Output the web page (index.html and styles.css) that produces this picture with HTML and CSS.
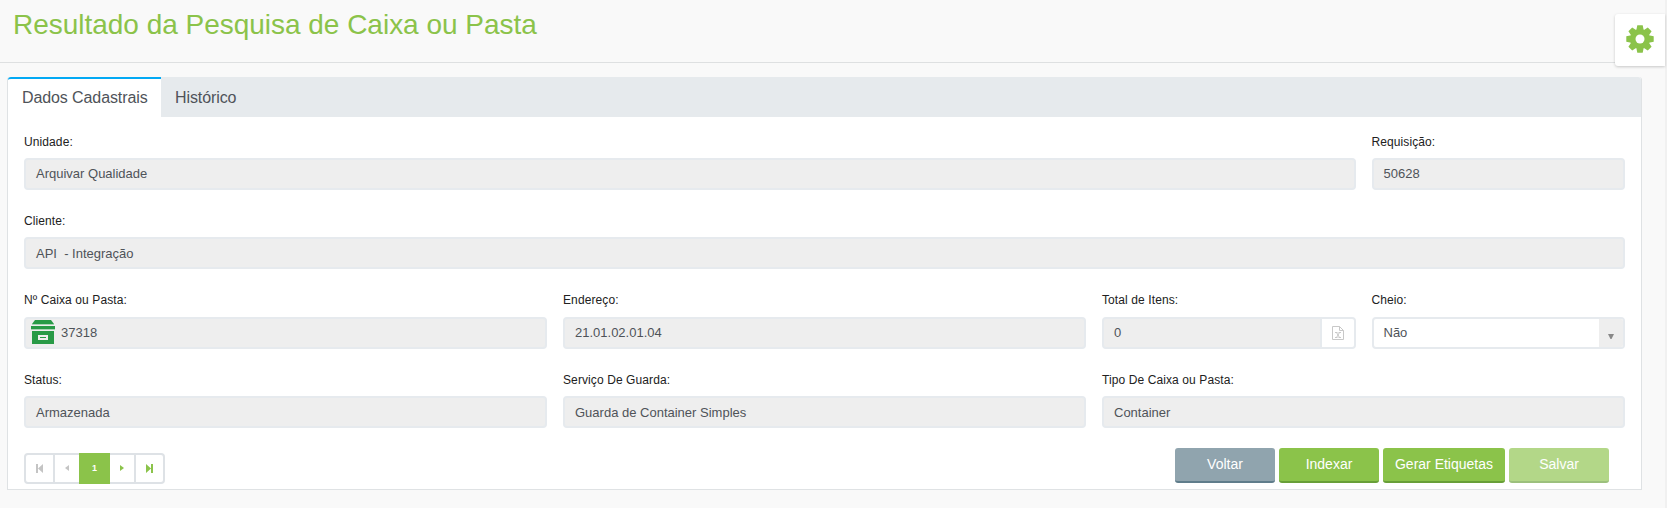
FILE: index.html
```
<!DOCTYPE html>
<html lang="pt-BR">
<head>
<meta charset="utf-8">
<title>Resultado da Pesquisa de Caixa ou Pasta</title>
<link rel="stylesheet" href="styles.css">
</head>
<body>
<header class="header"><h1 class="title">Resultado da Pesquisa de Caixa ou Pasta</h1></header>
<main class="panel">
  <nav class="tabs">
    <a class="tab tab-active"><span>Dados Cadastrais</span></a>
    <a class="tab"><span>Histórico</span></a>
  </nav>
  <form class="form">
    <div class="field w10"><label class="label">Unidade:</label><div class="input">Arquivar Qualidade</div></div>
    <div class="field w2"><label class="label">Requisição:</label><div class="input">50628</div></div>
    <div class="field w12"><label class="label">Cliente:</label><div class="input input-low">API&nbsp; - Integração</div></div>
    <div class="field w4"><label class="label label-high">Nº Caixa ou Pasta:</label>
      <div class="input input-box">
        <svg class="box-icon" width="24" height="24" viewBox="0 0 24 24"><path fill="#289a46" d="M4 0h16l3 4H1zM0 6h24v3H0zM1 11h22v13H1z"/><path fill="#a9d3b4" d="M1 4h22v1H1zM0 9h24v1H0z"/><path fill="#eee" d="M7 15h10v5H7z"/><path fill="#289a46" d="M9 17h6v1H9z"/></svg>
        <span>37318</span>
      </div></div>
    <div class="field w4"><label class="label label-high">Endereço:</label><div class="input">21.01.02.01.04</div></div>
    <div class="field w2"><label class="label label-high">Total de Itens:</label>
      <div class="input input-group"><span class="grow">0</span>
        <span class="addon"><svg width="12" height="14" viewBox="0 0 12 14" fill="none" stroke="#c8c8c8"><path d="M.5.5h7l4 4v9H.5zM7.500.5v4h4M3 6.500h2.500m1 0H9M3 11.500h2.500m1 0H9M4.500 6.500l3 5m0-5l-3 5"/></svg></span>
      </div></div>
    <div class="field w2"><label class="label label-high">Cheio:</label>
      <div class="input input-group select"><span class="grow">Não</span>
        <span class="arrow"><svg width="6" height="5" viewBox="0 0 6 5"><path fill="#888" d="M0 0h6L3.500 5h-1z"/></svg></span>
      </div></div>
    <div class="field w4"><label class="label">Status:</label><div class="input input-low">Armazenada</div></div>
    <div class="field w4"><label class="label">Serviço De Guarda:</label><div class="input input-low">Guarda de Container Simples</div></div>
    <div class="field w4"><label class="label">Tipo De Caixa ou Pasta:</label><div class="input input-low">Container</div></div>
  </form>
  <div class="footer">
    <div class="pager">
      <span class="page first"><svg width="7" height="9" viewBox="0 0 7 9" fill="#c4c4c4"><path d="M0 0h2v9H0zM7 0v9L2 4.500z"/></svg></span>
      <span class="page prev"><svg width="4" height="6" viewBox="0 0 4 6" fill="#c4c4c4"><path d="M4 0v6L0 3z"/></svg></span>
      <span class="page current">1</span>
      <span class="page next"><svg width="4" height="6" viewBox="0 0 4 6" fill="#8bc34a"><path d="M0 0v6l4-3z"/></svg></span>
      <span class="page last"><svg width="7" height="9" viewBox="0 0 7 9" fill="#8bc34a"><path d="M5 0h2v9H5zM0 0v9l5-4.500z"/></svg></span>
    </div>
    <div class="actions">
      <button class="btn btn-gray">Voltar</button>
      <button class="btn">Indexar</button>
      <button class="btn btn-wide">Gerar Etiquetas</button>
      <button class="btn" disabled>Salvar</button>
    </div>
  </div>
</main>
<div class="scroll-edge"></div>
<aside class="settings">
  <svg width="28" height="28" viewBox="-14 -14 28 28"><g fill="#8bc34a"><circle r="10"/><path d="M-2.700-13.700h5.400l1 5h-7.400zM-2.700 13.700h5.400l1-5h-7.400zM-13.700-2.700v5.400l5 1v-7.400zM13.700-2.700v5.400l-5 1v-7.400z"/><path transform="rotate(45)" d="M-2.700-13.700h5.400l1 5h-7.400zM-2.700 13.700h5.400l1-5h-7.400zM-13.700-2.700v5.400l5 1v-7.400zM13.700-2.700v5.400l-5 1v-7.400z"/></g><circle r="4.500" fill="#fff"/></svg>
</aside>
</body>
</html>
```
FILE: styles.css
```
* { box-sizing: border-box; }
body { margin: 0; height: 508px; overflow: hidden; background: #f9f9f9; font-family: "Liberation Sans", Arial, sans-serif; font-size: 13px; color: #4f5359; }
.header { height: 63px; border-bottom: 1px solid #dee0e1; padding: 9px 13px; }
.title { margin: 0; font-size: 28px; line-height: 32px; font-weight: 400; color: #8bc34a; letter-spacing: -0.02px; }
.panel { margin: 14px 0 0 7px; width: 1635px; height: 413px; background: #fff; border: 1px solid #dfe2e4; border-top: 0; border-radius: 3px 3px 0 0; }
.tabs { display: flex; height: 40px; background: #e6eaed; border-radius: 3px 3px 0 0; }
.tab { padding: 12px 14px 0; font-size: 16px; line-height: 18px; letter-spacing: -0.1px; }
.tab-active { width: 153px; padding-top: 10px; background: #fff; border-top: 2px solid #03a9f4; border-radius: 3px 0 0 0; white-space: nowrap; }
.form { display: grid; grid-template-columns: repeat(12, minmax(0, 1fr)); column-gap: 16px; grid-template-rows: 79px 80px 79px 79px; padding: 17px 16px 0; height: 328px; }
.field { display: flex; flex-direction: column; }
.w2 { grid-column: span 2; }
.w4 { grid-column: span 4; }
.w10 { grid-column: span 10; }
.w12 { grid-column: span 12; }
.label { font-size: 12px; line-height: 16px; color: #212121; margin-bottom: 8px; letter-spacing: 0.1px; }
.label-high { margin-top: -1px; margin-bottom: 9px; }
.input { display: flex; align-items: center; height: 32px; padding: 0 10px 2px; background: #eee; border: 2px solid #e6eaee; border-radius: 4px; }
.input-low { padding-bottom: 0; }
.input-box { padding-left: 5px; gap: 6px; }
.box-icon { margin-top: 0; }
.input-group { padding: 0; align-items: stretch; line-height: 27px; overflow: hidden; }
.grow { flex: 1; padding-left: 10px; }
.addon { display: flex; align-items: center; justify-content: center; width: 34px; background: #fff; border-left: 2px solid #e6eaee; }
.select { background: #fff; }
.arrow { display: flex; justify-content: center; align-items: center; width: 24px; padding-top: 6px; background: #eee; }
.footer { display: flex; justify-content: space-between; padding: 2px 32px 0 16px; }
.pager { display: flex; width: 141px; height: 31px; margin-top: 6px; border: 2px solid #dee2e6; border-radius: 4px; }
.page { display: flex; align-items: center; justify-content: center; height: 27px; padding-bottom: 1px; }
.first { width: 29px; border-right: 2px solid #dee2e6; }
.prev { width: 24px; }
.current { width: 31px; height: 31px; margin-top: -2px; padding-bottom: 2px; background: #8bc34a; color: #fff; font-size: 9px; font-weight: 700; }
.next { width: 26px; border-right: 2px solid #dee2e6; }
.last { width: 27px; }
.actions { display: flex; gap: 4px; align-items: flex-start; padding-top: 1px; }
.btn { width: 100px; height: 35px; padding: 0 0 1px; background: #8bc34a; color: #fff; border: 0; border-bottom: 2px solid #689f38; border-radius: 3px; font: 14px "Liberation Sans", Arial, sans-serif; }
.btn-wide { width: 122px; }
.btn-gray { background: #90a4ae; border-bottom-color: #607d8b; }
.btn:disabled { opacity: .65; }
.scroll-edge { position: absolute; right: 0; top: 0; width: 2px; height: 508px; background: #f1f1f1; }
.settings { position: absolute; left: 1615px; top: 14px; width: 50px; height: 52px; padding: 11px; background: #fff; border-radius: 3px 0 0 3px; box-shadow: 0 1px 3px rgba(0,0,0,.2); }
```
